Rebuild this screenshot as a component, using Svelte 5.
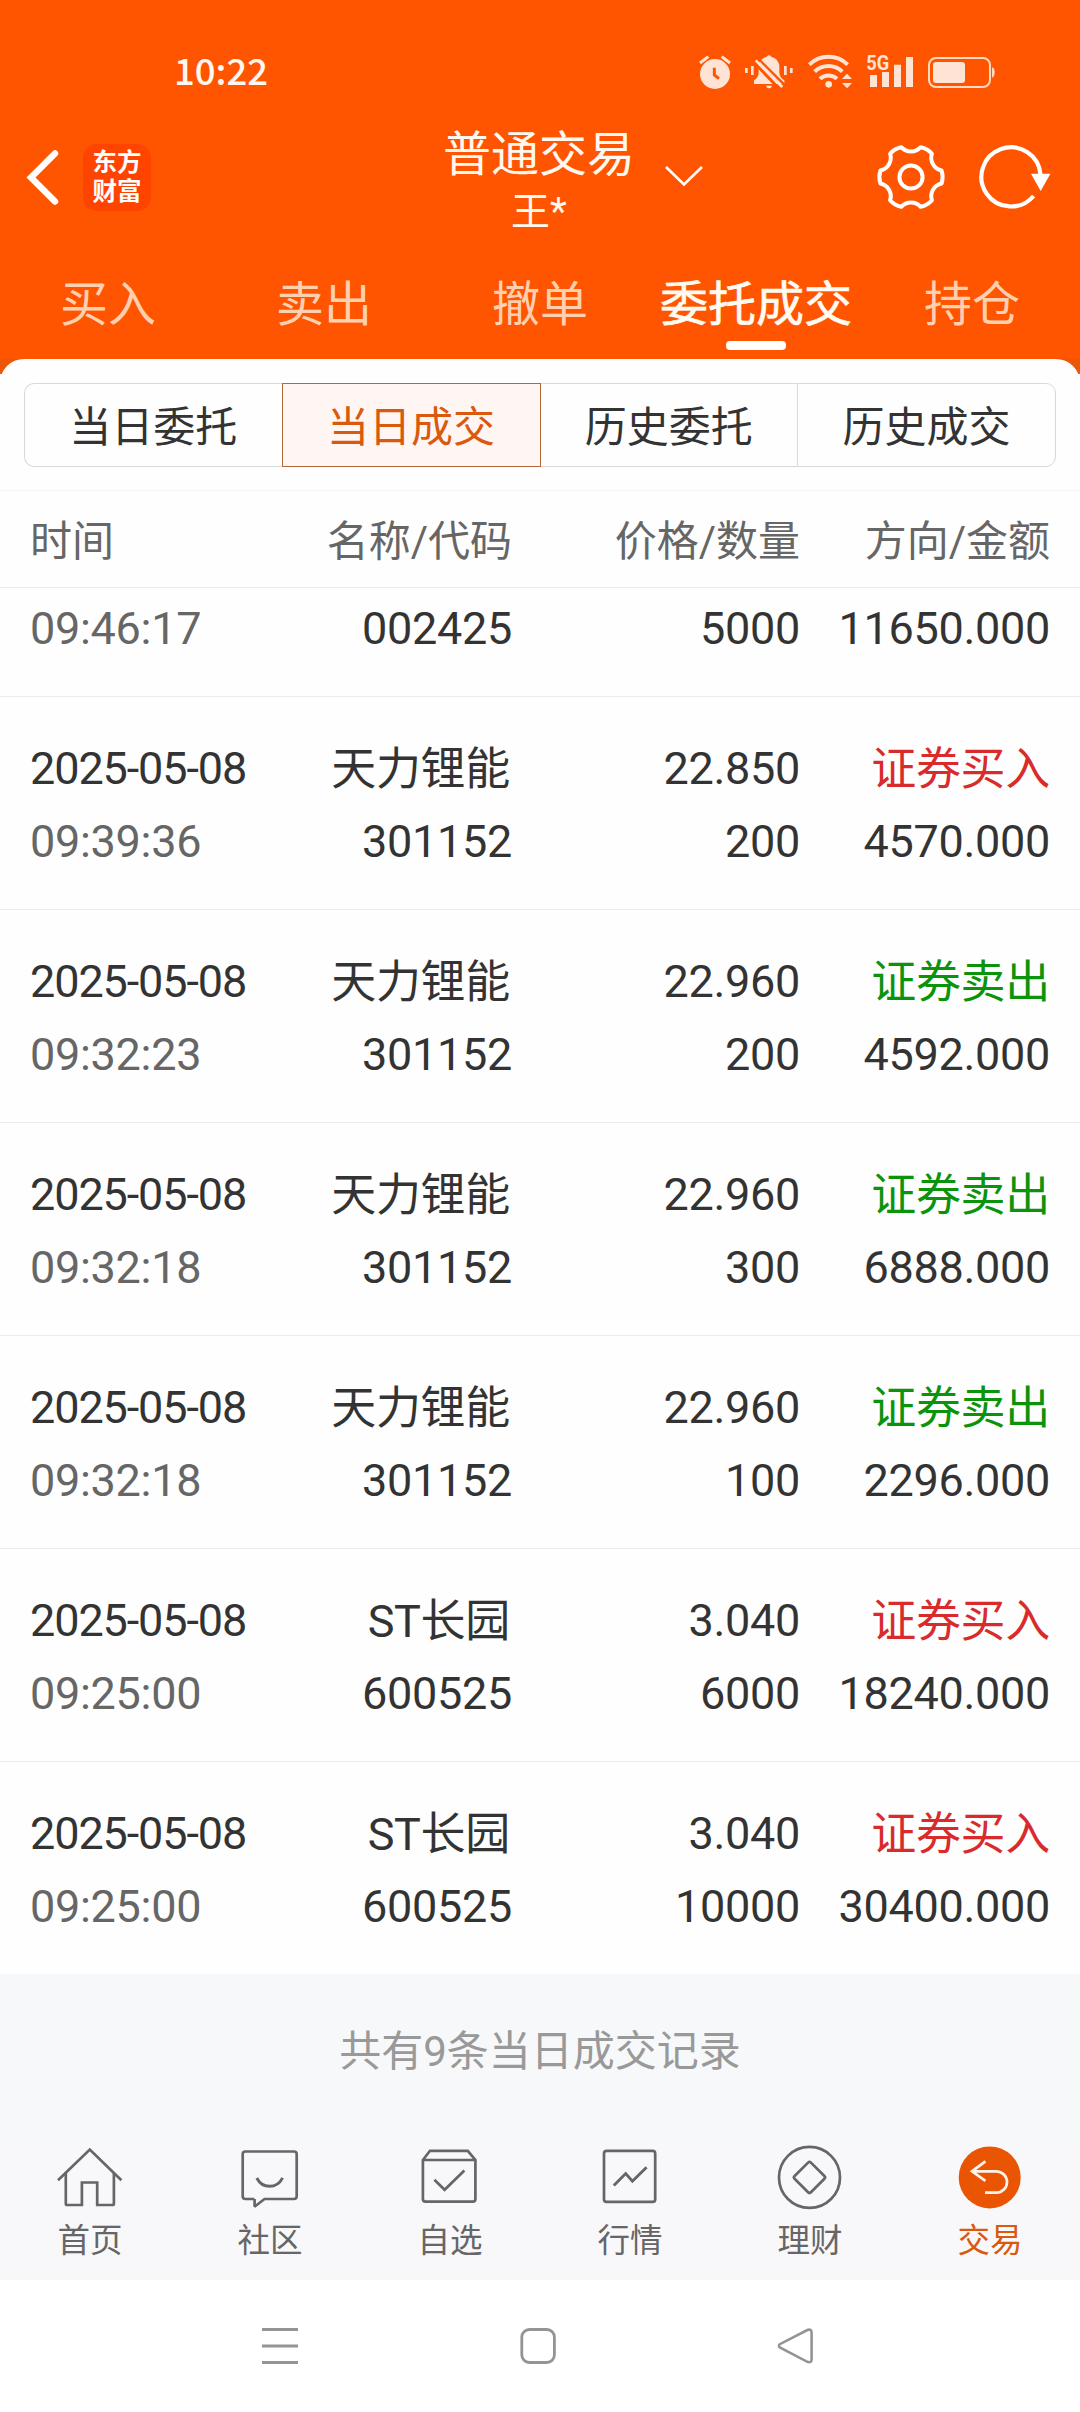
<script lang="ts">
	type Deal = {
		date?: string;
		time: string;
		name?: string;
		code: string;
		price?: string;
		qty: string;
		side?: 'buy' | 'sell';
		amount: string;
	};

	const tabs = ['买入', '卖出', '撤单', '委托成交', '持仓'];
	const segments = ['当日委托', '当日成交', '历史委托', '历史成交'];
	const columns = ['时间', '名称/代码', '价格/数量', '方向/金额'];
	const sideLabels = { buy: '证券买入', sell: '证券卖出' };

	// the first deal is scrolled half way under the column heads
	const deals: Deal[] = [
		{ time: '09:46:17', code: '002425', qty: '5000', amount: '11650.000' },
		{ date: '2025-05-08', time: '09:39:36', name: '天力锂能', code: '301152', price: '22.850', qty: '200', side: 'buy', amount: '4570.000' },
		{ date: '2025-05-08', time: '09:32:23', name: '天力锂能', code: '301152', price: '22.960', qty: '200', side: 'sell', amount: '4592.000' },
		{ date: '2025-05-08', time: '09:32:18', name: '天力锂能', code: '301152', price: '22.960', qty: '300', side: 'sell', amount: '6888.000' },
		{ date: '2025-05-08', time: '09:32:18', name: '天力锂能', code: '301152', price: '22.960', qty: '100', side: 'sell', amount: '2296.000' },
		{ date: '2025-05-08', time: '09:25:00', name: 'ST长园', code: '600525', price: '3.040', qty: '6000', side: 'buy', amount: '18240.000' },
		{ date: '2025-05-08', time: '09:25:00', name: 'ST长园', code: '600525', price: '3.040', qty: '10000', side: 'buy', amount: '30400.000' }
	];

	const navItems = [
		{ id: 'home', label: '首页' },
		{ id: 'community', label: '社区' },
		{ id: 'watchlist', label: '自选' },
		{ id: 'market', label: '行情' },
		{ id: 'wealth', label: '理财' },
		{ id: 'trade', label: '交易' }
	];

	let activeTab = $state('委托成交');
	let activeSegment = $state('当日成交');
	let activeNav = $state('trade');
</script>

<div class="screen">
	<header>
		<div class="status-bar">
			<span class="clock">10:22</span>
			<div class="status-icons">
				<svg width="32" height="36" viewBox="120 72 96 108">
					<circle cx="168" cy="132" r="45" fill="#ffe3d4" />
					<path d="M123 99 L148 80 M213 99 L188 80" stroke="#ffe3d4" stroke-width="9" fill="none" />
					<path d="M166 113 V135 L180 146" stroke="#ff5500" stroke-width="9" fill="none" />
				</svg>
				<svg width="50" height="36" viewBox="255 72 150 108">
					<path d="M285 162 V151 Q299 143 299 126 V112 Q299 86 323 80 Q330 72 337 80 Q361 86 361 112 V126 Q361 143 376 151 V162 Z M321 167 H339 Q337 175 330 175 Q323 175 321 167 Z" fill="#ffe3d4" />
					<path d="M284 96 L366 182" stroke="#ff5500" stroke-width="9" />
					<path d="M296 84 L378 166" stroke="#ff5500" stroke-width="7" />
					<path d="M290 91 L370 171" stroke="#ffe3d4" stroke-width="8" />
					<path d="M262 114 V129 M280 108 V135 M379 108 V135 M397 114 V129" stroke="#ffe3d4" stroke-width="8" />
				</svg>
				<svg width="46" height="36" viewBox="441 72 138 108">
					<g fill="none" stroke="#ffe3d4" stroke-width="12">
						<path d="M448 104 A82 82 0 0 1 563 104" />
						<path d="M464 125 A60 60 0 0 1 547 125" />
						<path d="M480 146 A38 38 0 0 1 531 146" />
					</g>
					<circle cx="506" cy="163" r="10" fill="#ffe3d4" />
					<path d="M546 147 L561 131 L576 147 Z M546 159 L561 175 L576 159 Z" fill="#ffe3d4" />
				</svg>
				<svg class="signal" width="48" height="36" viewBox="615 72 144 108">
					<text x="616" y="121" textLength="69" lengthAdjust="spacingAndGlyphs" class="network">5G</text>
					<path d="M627 135 H648 V171 H627 Z M663 126 H684 V171 H663 Z M699 104 H720 V171 H699 Z M735 81 H756 V171 H735 Z" fill="#ffe3d4" />
				</svg>
				<svg width="69" height="36" viewBox="801 72 207 108">
					<rect x="807" y="84" width="183" height="87" rx="21" fill="none" stroke="#ffd9c0" stroke-width="6" />
					<rect x="819" y="96" width="96" height="63" rx="9" fill="#ffe3d4" />
					<path d="M996 112 Q1004 114 1004 127 Q1004 141 996 143 Z" fill="#ffd9c0" />
				</svg>
			</div>
		</div>

		<div class="title-bar">
			<div class="title-left">
				<svg width="36" height="60" viewBox="0 0 36 60" fill="none" stroke="#fff" stroke-width="6.4" stroke-linecap="round" stroke-linejoin="miter">
					<path d="M30 6.5 L6 30.5 L30 54.5" />
				</svg>
				<div class="logo"><span>东方</span><span>财富</span></div>
			</div>
			<div class="title">
				<h1>普通交易</h1>
				<p>王*</p>
			</div>
			<div class="title-right">
				<svg class="expand" width="38" height="22" viewBox="0 0 38 22" fill="none" stroke="#fff" stroke-width="2.6">
					<path d="M1 1 L19 18.5 L37 1" />
				</svg>
				<svg width="72" height="72" viewBox="-36 -36 72 72" fill="none" stroke="#fff" stroke-width="4" stroke-linejoin="round">
					<path d="M30.6 -6.5 Q32.6 0 30.6 6.5 A13 13 0 0 0 20.9 23.3 Q16.5 28.5 9.7 29.8 A13 13 0 0 0 -9.7 29.8 Q-16.5 28.5 -20.9 23.3 A13 13 0 0 0 -30.6 6.5 Q-32.6 0 -30.6 -6.5 A13 13 0 0 0 -20.9 -23.3 Q-16.5 -28.5 -9.7 -29.8 A13 13 0 0 0 9.7 -29.8 Q16.5 -28.5 20.9 -23.3 A13 13 0 0 0 30.6 -6.5 Z" />
					<circle r="11.6" />
				</svg>
				<svg width="76" height="72" viewBox="-36 -36 76 72">
					<path d="M22.6 19 A29.6 29.6 0 1 1 29.5 -2.5" fill="none" stroke="#fff" stroke-width="4.2" />
					<path d="M20 -3.2 H39.4 L29.7 14 Z" fill="#fff" />
				</svg>
			</div>
		</div>

		<nav class="tabs">
			{#each tabs as tab}
				<button class="tab" class:active={tab === activeTab} onclick={() => (activeTab = tab)}>{tab}</button>
			{/each}
		</nav>
		<div class="sheet-edge"><div class="sheet-top"></div></div>
	</header>

	<div class="segments">
		{#each segments as segment}
			<button class="segment" class:active={segment === activeSegment} onclick={() => (activeSegment = segment)}>{segment}</button>
		{/each}
	</div>

	<div class="columns grid">
		{#each columns as column}
			<span>{column}</span>
		{/each}
	</div>

	<div class="deals">
		{#each deals as deal}
			<div class="deal" class:cut={!deal.date}>
				{#if deal.date && deal.side}
					<div class="grid line">
						<span class="date">{deal.date}</span>
						<span class="name">{deal.name}</span>
						<span>{deal.price}</span>
						<span class="side {deal.side}">{sideLabels[deal.side]}</span>
					</div>
				{/if}
				<div class="grid line">
					<span class="time">{deal.time}</span>
					<span>{deal.code}</span>
					<span>{deal.qty}</span>
					<span>{deal.amount}</span>
				</div>
			</div>
		{/each}
	</div>

	<p class="summary">共有9条当日成交记录</p>

	<nav class="bottom-nav">
		{#each navItems as item}
			<button class="nav-item" class:active={item.id === activeNav} onclick={() => (activeNav = item.id)}>
				<svg width="72" height="72" viewBox="0 0 72 72" fill="none" stroke="#666" stroke-width="2.7">
					{#if item.id === 'home'}
						<path d="M4 38.2 L35.8 7.6 L67.4 38.2" />
						<path d="M11.8 31 V61.5 Q11.8 63 13.3 63 H27.9 V40.5 H43.2 V63 H58.4 Q59.9 63 59.9 61.5 V31" />
					{:else if item.id === 'community'}
						<path d="M20.3 57 H11.4 Q8.7 57 8.7 54.3 V12.2 Q8.7 9.5 11.4 9.5 H60 Q62.7 9.5 62.7 12.2 V54.3 Q62.7 57 60 57 H30.5 L21.2 64.2 L20.6 63.8 V57" />
						<path d="M22.8 36 Q27 44.3 35.6 44.3 Q44.2 44.3 48.6 35.8" stroke-width="2.9" />
					{:else if item.id === 'watchlist'}
						<path d="M8.9 18 L16 8.8 H53.8 L61.4 18 V57 Q61.4 59.7 58.7 59.7 H11.6 Q8.9 59.7 8.9 57 Z M8.9 18 H61.4" />
						<path d="M20.4 37.8 L30.6 47.8 L50.4 28.5" />
					{:else if item.id === 'market'}
						<rect x="10" y="8.8" width="51.2" height="51" rx="2.6" />
						<path d="M19.8 43.6 L31.7 31.6 L38.4 39.2 L52.6 25.2" stroke-width="2.9" />
					{:else if item.id === 'wealth'}
						<circle cx="35.5" cy="35.4" r="30.5" />
						<path d="M34.1 20.6 Q35.5 19.2 36.9 20.6 L50.4 34 Q51.8 35.4 50.4 36.8 L36.9 50.2 Q35.5 51.6 34.1 50.2 L20.6 36.8 Q19.2 35.4 20.6 34 Z" />
					{:else}
						<circle cx="35.7" cy="35.4" r="31" fill="#ea5504" stroke="none" />
						<path d="M31.4 19.3 L18 29.3 L31.4 38.8 M18 29.3 H42.3 A10.7 10.7 0 0 1 42.3 50.7 H31" stroke="#fff3ea" stroke-width="2.7" />
					{/if}
				</svg>
				<span>{item.label}</span>
			</button>
		{/each}
	</nav>

	<div class="system-nav">
		<svg width="40" height="40" viewBox="0 0 40 40" fill="none" stroke="#949494" stroke-width="3">
			<path d="M2 3.5 H38 M2 20 H38 M2 36.5 H38" />
		</svg>
		<svg width="40" height="40" viewBox="0 0 40 40" fill="none" stroke="#949494" stroke-width="2.8">
			<rect x="3.8" y="3.5" width="32.6" height="33" rx="7.5" />
		</svg>
		<svg width="40" height="40" viewBox="0 0 40 40" fill="none" stroke="#949494" stroke-width="2.6">
			<path d="M3.8 18.2 Q2 20 3.8 21.4 L31.4 35.8 Q35.6 37.2 35.6 33.4 V6.4 Q35.6 2.6 31.4 4 Z" />
		</svg>
	</div>
</div>

<style>
	:global(body) {
		margin: 0;
		background: #fff;
	}

	.screen {
		width: 1080px;
		height: 2412px;
		display: flex;
		flex-direction: column;
		overflow: hidden;
		background: #fefefe;
		color: #333;
		font-family: Roboto, 'Noto Sans CJK SC', sans-serif;
	}
	svg {
		display: block;
		flex-shrink: 0;
	}
	button {
		padding: 0;
		border: 0;
		background: none;
		font: inherit;
		color: inherit;
	}
	h1,
	p {
		margin: 0;
		font-weight: 400;
	}

	header {
		height: 374px;
		background: #ff5500;
		color: #fff8f0;
	}
	.status-bar {
		display: flex;
		justify-content: space-between;
		align-items: flex-start;
		height: 36px;
		padding: 54px 84px 20px 174px;
	}
	.clock {
		font-family: 'Noto Sans CJK SC', sans-serif;
		font-size: 36.5px;
		font-weight: 500;
		line-height: 32px;
	}
	.status-icons {
		display: flex;
		gap: 13px;
	}
	.signal {
		overflow: visible;
	}
	.network {
		font-family: Roboto, sans-serif;
		font-size: 62px;
		font-weight: 700;
		fill: #ffe3d4;
	}

	.title-bar {
		display: grid;
		grid-template-columns: 1fr auto 1fr;
		align-items: center;
		height: 134px;
		padding: 0 29px 0 25px;
	}
	.title-left {
		display: flex;
		align-items: center;
		gap: 22px;
	}
	.logo {
		display: flex;
		flex-direction: column;
		align-items: center;
		justify-content: center;
		width: 68px;
		height: 67px;
		border-radius: 14px;
		background: #ff4400;
		color: #fff;
		font-size: 24.5px;
		font-weight: 700;
		line-height: 29px;
	}
	.title {
		padding: 13px 0 0 2px;
		text-align: center;
	}
	.title h1 {
		font-size: 48px;
		line-height: 56px;
	}
	.title p {
		font-size: 39px;
		line-height: 58px;
	}
	.title-right {
		display: flex;
		align-items: center;
		gap: 28px;
	}
	.expand {
		margin: 0 auto 0 30px;
	}

	.tabs {
		display: flex;
		height: 115px;
	}
	.tab {
		display: flex;
		flex-direction: column;
		align-items: center;
		flex: 1;
		padding-top: 31px;
		font-size: 48px;
		line-height: 60px;
		color: #ffd0b0;
	}
	.tab.active {
		color: #fffaf2;
		-webkit-text-stroke: 0.7px #fffaf2;
	}
	.tab.active::after {
		content: '';
		width: 60px;
		height: 9px;
		margin-top: 6px;
		border-radius: 4px;
		background: #fff;
	}
	.sheet-edge {
		height: 15px;
		overflow: hidden;
		background: #ec5605;
	}
	.sheet-top {
		height: 48px;
		border-radius: 24px;
		background: #fefefe;
	}

	.segments {
		display: flex;
		height: 84px;
		margin: 9px 24px 23px;
	}
	.segment {
		flex: 1;
		box-sizing: border-box;
		padding-bottom: 3px;
		border: 1px solid #d9d9d9;
		border-right-width: 0;
		font-size: 42px;
		color: #333;
	}
	.segment:first-child {
		border-radius: 10px 0 0 10px;
	}
	.segment:last-child {
		border-right-width: 1px;
		border-radius: 0 10px 10px 0;
	}
	.segment.active {
		border: 1px solid #b4683a;
		background: #fff5f2;
		color: #d9590f;
	}
	.segment.active + .segment {
		border-left-width: 0;
	}

	.grid {
		display: grid;
		grid-template-columns: 240px 242px 288px 250px;
		padding: 0 30px;
	}
	.grid span:not(:first-child) {
		text-align: right;
	}
	.columns {
		height: 96px;
		border-top: 1px solid #f5f5f5;
		border-bottom: 1px solid #ebebeb;
		font-size: 42px;
		line-height: 101px;
		color: #666;
	}

	.deal {
		box-sizing: border-box;
		height: 213px;
		padding-top: 35px;
		border-bottom: 1px solid #ebebeb;
	}
	.deal.cut {
		height: 109px;
		padding-top: 4px;
	}
	.deal:last-child {
		height: 212px;
		border-bottom: 0;
	}
	.line {
		height: 73px;
		font-size: 45px;
		line-height: 73px;
		letter-spacing: -0.3px;
	}
	.date {
		letter-spacing: -1.1px;
	}
	.time {
		color: #666;
	}
	.name,
	.side {
		padding-top: 1px;
	}
	.name {
		padding-right: 2px;
	}
	.buy {
		color: #d92b2b;
	}
	.sell {
		color: #0c930c;
	}

	.summary {
		height: 168px;
		background: #f7f8fa;
		color: #999;
		font-size: 42px;
		line-height: 155px;
		text-align: center;
	}
	.bottom-nav {
		display: flex;
		height: 138px;
		background: #f8f8fa;
	}
	.nav-item {
		display: flex;
		flex-direction: column;
		align-items: center;
		flex: 1;
		font-size: 32.5px;
		line-height: 55px;
		color: #666;
	}
	.nav-item.active {
		color: #d9590f;
	}

	.system-nav {
		display: flex;
		justify-content: center;
		gap: 218px;
		flex: 1;
		padding: 46px 4px 0 0;
		background: #fff;
	}
</style>
